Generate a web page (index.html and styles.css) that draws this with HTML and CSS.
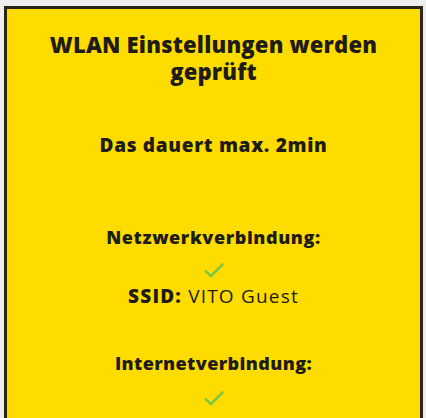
FILE: index.html
```html
<!DOCTYPE html>
<html>
<head>
<meta charset="utf-8">
<link rel="stylesheet" href="styles.css">
</head>
<body>
<div class="card">
  <h1 class="title">WLAN Einstellungen werden geprüft</h1>
  <p class="sub">Das dauert max. 2min</p>
  <p class="label label-net">Netzwerkverbindung:</p>
  <svg class="check" viewBox="0 0 22 18" width="22" height="18"><path d="M3 10.5 L8 15 L19.5 3.5" fill="none" stroke="#80c640" stroke-width="2.6" stroke-linecap="round" stroke-linejoin="round"/></svg>
  <p class="ssid"><b>SSID:</b> VITO Guest</p>
  <p class="label label-inet">Internetverbindung:</p>
  <svg class="check check-inet" viewBox="0 0 22 18" width="22" height="18"><path d="M3 10.5 L8 15 L19.5 3.5" fill="none" stroke="#80c640" stroke-width="2.6" stroke-linecap="round" stroke-linejoin="round"/></svg>
</div>
</body>
</html>
```
FILE: styles.css
```css
html, body {
  margin: 0;
  padding: 0;
  height: 100%;
  overflow: hidden;
}
body {
  background: #eeeeee;
  font-family: "Open Sans", Roboto, "Liberation Sans", sans-serif;
  color: #1e1c14;
  padding: 6px 3px 0 4px;
  box-sizing: border-box;
}
.card {
  background: #ffdc00;
  border: 3px solid #2b2517;
  border-bottom: none;
  height: 100%;
  box-sizing: border-box;
  display: flex;
  flex-direction: column;
  align-items: center;
  text-align: center;
}
.title {
  margin: 22px 30px 0;
  font-size: 22px;
  line-height: 27px;
  font-weight: 800;
  letter-spacing: 0.2px;
}
.sub {
  margin: 49px 0 0;
  font-size: 19px;
  line-height: 22px;
  font-weight: 800;
  letter-spacing: 0.7px;
}
.label {
  margin: 0;
  font-size: 18px;
  line-height: 22px;
  font-weight: 800;
  letter-spacing: 0.6px;
}
.label-net { margin-top: 70px; }
.label-inet { margin-top: 45px; letter-spacing: 0.4px; }
.check {
  margin-top: 13px;
  display: block;
}
.check-inet { margin-top: 15px; }
.ssid {
  margin: 6px 0 0;
  font-size: 19px;
  line-height: 22px;
  letter-spacing: 1.2px;
}
.ssid b { font-weight: 800; }
```
